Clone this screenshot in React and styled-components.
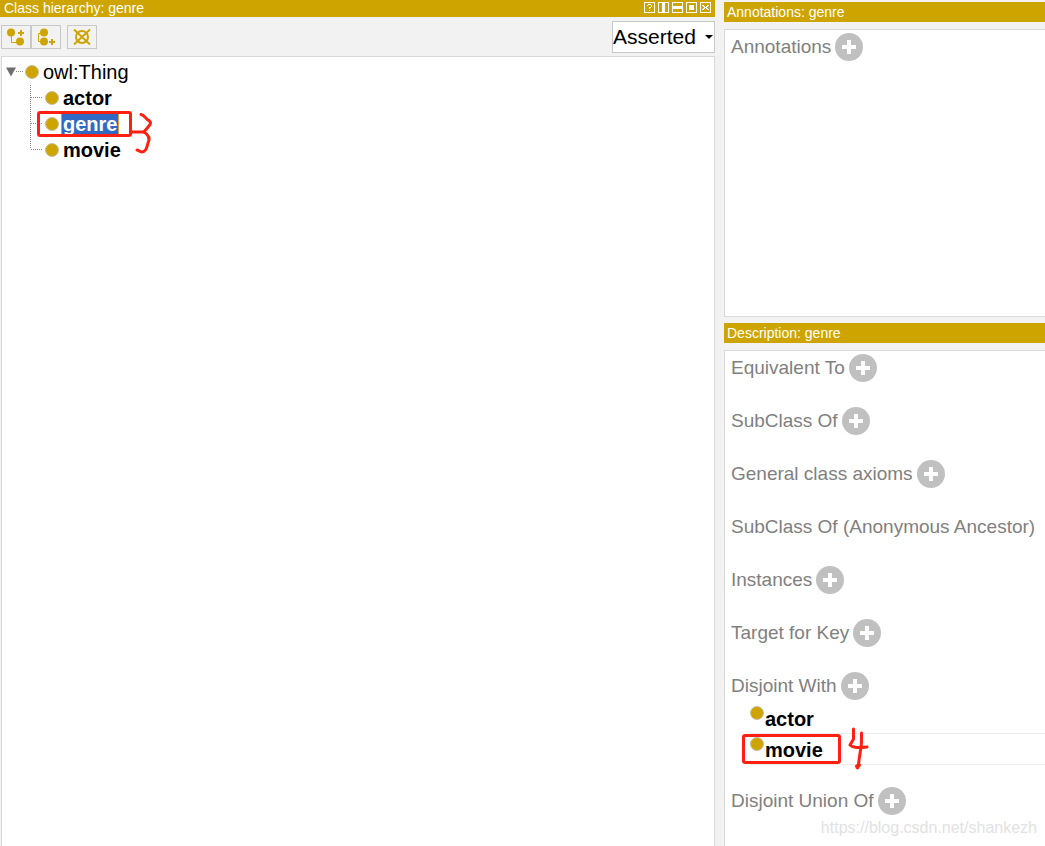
import React, { useState } from "react";
import styled, { createGlobalStyle, css } from "styled-components";

const gold = "#cea500";
const red = "#ff2010";

const GlobalStyle = createGlobalStyle`
  *, *::before, *::after { box-sizing: border-box; }
  body {
    margin: 0;
    background: #f2f2f2;
    color: #000;
    font-family: "Liberation Sans", Arial, sans-serif;
  }
  button, select { font-family: inherit; }
`;

const Workspace = styled.main`
  display: grid;
  grid-template-columns: minmax(0, 715fr) minmax(0, 321fr);
  column-gap: 9px;
  height: 100vh;
  overflow: hidden;
`;

const Column = styled.div`
  display: flex;
  flex-direction: column;
  min-width: 0;
  min-height: 0;
  padding-top: ${(p) => p.$top || 0}px;
`;

const Panel = styled.section`
  display: flex;
  flex-direction: column;
  flex: ${(p) => (p.$grow ? "1 0 auto" : "0 0 auto")};
  margin-bottom: ${(p) => (p.$grow ? 0 : 6)}px;
`;

const TitleBar = styled.header`
  display: flex;
  align-items: center;
  justify-content: space-between;
  height: ${(p) => (p.$compact ? 17 : 20)}px;
  padding: ${(p) => (p.$compact ? "0 4px 2px 4px" : "0 3px")};
  background: ${gold};
  color: #fff;
`;

const Title = styled.h2`
  margin: 0;
  font-size: 14px;
  font-weight: 400;
  line-height: 16px;
  white-space: nowrap;
`;

const WindowControls = styled.div`
  display: flex;
  gap: 3px;
`;

const WindowButton = styled.button`
  display: block;
  width: 11px;
  height: 11px;
  padding: 0;
  border: 0;
  background: none;
  svg { display: block; }
`;

const Toolbar = styled.div`
  display: flex;
  align-items: center;
  justify-content: space-between;
  padding: 4px 0 3px 1px;
`;

const ToolGroup = styled.div`
  display: flex;
`;

const ToolButton = styled.button`
  width: 30px;
  height: 24px;
  padding: 0;
  margin-left: ${(p) => (p.$apart ? 6 : 0)}px;
  border: 1px solid #c8c8c8;
  background: #f2f2f2;
  svg { display: block; margin: auto; }
`;

const SelectWrap = styled.label`
  position: relative;
  display: block;
  svg {
    position: absolute;
    top: 14px;
    right: 2px;
    pointer-events: none;
  }
`;

const ModeSelect = styled.select`
  display: block;
  appearance: none;
  width: 103px;
  height: 32px;
  padding: 0;
  border: 1px solid #c8c8c8;
  border-radius: 0;
  background: #fff;
  color: #000;
  font-size: 21px;
  line-height: 24px;
`;

const ContentBox = styled.div`
  flex: 1 0 auto;
  margin-top: ${(p) => (p.$tree ? 0 : 7)}px;
  margin-left: ${(p) => (p.$tree ? 1 : 0)}px;
  padding: ${(p) => (p.$tree ? "2px 4px" : "3px 0 0 6px")};
  min-height: ${(p) => p.$min || 0}px;
  border: 1px solid #d9d9d9;
  border-right-width: ${(p) => (p.$tree ? 1 : 0)}px;
  border-bottom-width: ${(p) => (p.$min ? 1 : 0)}px;
  background: #fff;
`;

const TreeList = styled.ul`
  margin: 0;
  padding: 0 0 0 ${(p) => (p.$nested ? 24 : 0)}px;
  list-style: none;
`;

const TreeRow = styled.div`
  position: relative;
  display: flex;
  align-items: center;
  height: 26px;
  svg { display: block; flex: none; }
`;

const Toggle = styled.button`
  width: 19px;
  height: 26px;
  padding: 0;
  border: 0;
  background: none;
`;

const ClassDot = styled.span`
  flex: none;
  width: 14px;
  height: 14px;
  border: 1px solid #c6bfa6;
  border-radius: 50%;
  background: ${gold};
`;

const ClassName = styled.span`
  margin-left: 3px;
  padding: 0 1px;
  font-size: 20px;
  font-weight: ${(p) => (p.$root ? 400 : 700)};
  line-height: 24px;
  ${(p) =>
    p.$selected &&
    css`
      background: #316ac5;
      color: #fff;
      box-shadow: 0 0 0 1px #e0a030;
    `}
`;

const Outline = styled.span`
  position: absolute;
  z-index: 1;
  top: 0;
  left: ${(p) => p.$left}px;
  width: ${(p) => p.$width}px;
  height: ${(p) => p.$height}px;
  border: 3px solid ${red};
  border-radius: 3px;
`;

const Stroke = styled.svg`
  position: absolute;
  z-index: 1;
  top: ${(p) => p.$top}px;
  left: ${(p) => p.$left}px;
  fill: none;
  stroke: ${red};
  stroke-width: 3;
  stroke-linecap: round;
  stroke-linejoin: round;
`;

const Sections = styled.div`
  display: flex;
  flex-direction: column;
  gap: 22px;
`;

const SectionHead = styled.div`
  display: flex;
  align-items: center;
  height: 28px;
  margin-bottom: 3px;
  gap: 4px;
`;

const SectionTitle = styled.h3`
  margin: 0;
  color: #808080;
  font-size: 19px;
  font-weight: 400;
  line-height: 22px;
  white-space: nowrap;
`;

const AddButton = styled.button`
  flex: none;
  width: 28px;
  height: 28px;
  padding: 0;
  border: 0;
  border-radius: 50%;
  background: #c0c0c0;
  svg { display: block; margin: auto; }
`;

const Items = styled.ul`
  margin: 0;
  padding: 0;
  list-style: none;
`;

const Item = styled.li`
  position: relative;
  display: flex;
  align-items: flex-start;
  height: 31px;
  padding: 3px 0 0 19px;
  &::after {
    content: "";
    position: absolute;
    right: 0;
    bottom: 0;
    left: 19px;
    border-bottom: 1px solid #ececec;
  }
`;

const ItemName = styled.span`
  padding: 1px;
  font-size: 20px;
  font-weight: 700;
  line-height: 24px;
`;

const Watermark = styled.p`
  position: absolute;
  right: 8px;
  bottom: 9px;
  margin: 0;
  color: #e2e2e2;
  font-size: 16px;
  line-height: 18px;
`;

const controls = [
  { label: "Help", d: "M3 3h1v1H3zM4 2h3v1H4zM7 3h1v2H7zM5 5h2v1H5zM5 6h1v1H5zM5 8h1v1H5z" },
  { label: "Split vertically", d: "M4 1h3v9H4z" },
  { label: "Split horizontally", d: "M1 4h9v3H1z" },
  { label: "Float", d: "M3 3h5v5H3z" },
  { label: "Close", d: "M2 3h2v1h1v1h1V4h1V3h2v1H8v1H7v1h1v1h1v1H7V7H6V6H5v1H4v1H2V7h1V6h1V5H3V4H2z" },
];

function ControlIcon({ d }) {
  return (
    <svg width="11" height="11" viewBox="0 0 11 11">
      <rect x="0.5" y="0.5" width="10" height="10" fill="none" stroke="#fff" />
      <path d={d} fill="#fff" />
    </svg>
  );
}

function SubclassIcon() {
  return (
    <svg width="22" height="20" viewBox="1 0 22 20" fill="none" stroke={gold}>
      <path d="M7.5 5v10.500h8" />
      <circle cx="7" cy="5.500" r="4" fill={gold} stroke="none" />
      <circle cx="16" cy="14.500" r="4" fill={gold} stroke="none" />
      <path d="M14 6h6M17 3v6" strokeWidth="2" />
    </svg>
  );
}

function SiblingIcon() {
  return (
    <svg width="22" height="20" viewBox="1 0 22 20" fill="none" stroke={gold}>
      <path d="M9 6.500H4.500v8H9" />
      <circle cx="10" cy="5.500" r="4" fill={gold} stroke="none" />
      <circle cx="10" cy="14.500" r="4" fill={gold} stroke="none" />
      <path d="M15 15h6M18 12v6" strokeWidth="2" />
    </svg>
  );
}

function DeleteIcon() {
  return (
    <svg width="20" height="20" viewBox="0 0 20 20" fill="none" stroke={gold} strokeWidth="2">
      <circle cx="10" cy="10" r="6" />
      <path d="M2 2.500l16 15M18 2.500l-16 15" strokeWidth="1.800" />
    </svg>
  );
}

function Connector({ last }) {
  return (
    <svg width="15" height="26" viewBox="0 0 15 26" fill="none" stroke="#888" strokeDasharray="1 1">
      <path d={last ? "M0.500 0v12" : "M0.500 0v26"} />
      <path d="M1 12.500h11" />
    </svg>
  );
}

function Add({ name }) {
  return (
    <AddButton type="button" aria-label={`Add ${name}`}>
      <svg width="14" height="14" viewBox="0 0 14 14">
        <path d="M5 0h4v5h5v4H9v5H5V9H0V5h5z" fill="#fff" />
      </svg>
    </AddButton>
  );
}

function Section({ name, fixed, children }) {
  return (
    <div>
      <SectionHead>
        <SectionTitle>{name}</SectionTitle>
        {!fixed && <Add name={name} />}
      </SectionHead>
      {children}
    </div>
  );
}

const classes = ["actor", "genre", "movie"];

export default function App() {
  const [open, setOpen] = useState(true);
  return (
    <>
      <GlobalStyle />
      <Workspace>
        <Column>
          <Panel $grow>
            <TitleBar $compact>
              <Title>Class hierarchy: genre</Title>
              <WindowControls>
                {controls.map((c) => (
                  <WindowButton key={c.label} type="button" aria-label={c.label}>
                    <ControlIcon d={c.d} />
                  </WindowButton>
                ))}
              </WindowControls>
            </TitleBar>
            <Toolbar>
              <ToolGroup>
                <ToolButton type="button" aria-label="Add subclass"><SubclassIcon /></ToolButton>
                <ToolButton type="button" aria-label="Add sibling class"><SiblingIcon /></ToolButton>
                <ToolButton $apart type="button" aria-label="Delete class"><DeleteIcon /></ToolButton>
              </ToolGroup>
              <SelectWrap>
                <ModeSelect aria-label="Hierarchy mode" defaultValue="Asserted">
                  <option>Asserted</option>
                  <option>Inferred</option>
                </ModeSelect>
                <svg width="8" height="4" viewBox="0 0 8 4"><path d="M0 0h8L4 4z" /></svg>
              </SelectWrap>
            </Toolbar>
            <ContentBox $tree>
              <TreeList>
                <li>
                  <TreeRow>
                    <Toggle type="button" aria-label="Toggle owl:Thing" aria-expanded={open} onClick={() => setOpen(!open)}>
                      <svg width="19" height="26" viewBox="0 0 19 26">
                        <path d="M0 8.500h10L5 17.500z" fill="#6e6e6e" />
                        <path d="M10 12.500h7" stroke="#888" strokeDasharray="1 1" />
                      </svg>
                    </Toggle>
                    <ClassDot />
                    <ClassName $root>owl:Thing</ClassName>
                  </TreeRow>
                  {open && (
                    <TreeList $nested>
                      {classes.map((name, i) => (
                        <li key={name}>
                          <TreeRow>
                            <Connector last={i === classes.length - 1} />
                            <ClassDot />
                            <ClassName $selected={name === "genre"}>{name}</ClassName>
                            {name === "genre" && (
                              <>
                                <Outline $left={7} $width={95} $height={26} />
                                <Stroke $left={100} $top={0} width="26" height="44" viewBox="0 0 26 44" aria-hidden="true">
                                  <path d="M11 3.500C15 4 15 8 19 9.500C23 13 18 15 14 21H2" />
                                  <path d="M14 21C19 24 20 28 18 32C17 37 15 41 12 41C9 41 9 39 7 39" />
                                </Stroke>
                              </>
                            )}
                          </TreeRow>
                        </li>
                      ))}
                    </TreeList>
                  )}
                </li>
              </TreeList>
            </ContentBox>
          </Panel>
        </Column>
        <Column $top={2}>
          <Panel>
            <TitleBar><Title>Annotations: genre</Title></TitleBar>
            <ContentBox $min={288}>
              <Section name="Annotations" />
            </ContentBox>
          </Panel>
          <Panel $grow>
            <TitleBar><Title>Description: genre</Title></TitleBar>
            <ContentBox>
              <Sections>
                <Section name="Equivalent To" />
                <Section name="SubClass Of" />
                <Section name="General class axioms" />
                <Section name="SubClass Of (Anonymous Ancestor)" fixed />
                <Section name="Instances" />
                <Section name="Target for Key" />
                <Section name="Disjoint With">
                  <Items>
                    <Item><ClassDot /><ItemName>actor</ItemName></Item>
                    <Item>
                      <ClassDot /><ItemName>movie</ItemName>
                      <Outline $left={11} $width={99} $height={30} />
                      <Stroke $left={115} $top={-8} width="24" height="46" viewBox="0 0 24 46" aria-hidden="true">
                        <path d="M7.500 3v10L4 19C7 22 12 22 21 21M15.500 7v9C15 24 13 31 12.500 39" />
                        <path d="M10.500 40l3-1l-2 3z" />
                      </Stroke>
                    </Item>
                  </Items>
                </Section>
                <Section name="Disjoint Union Of" />
              </Sections>
            </ContentBox>
          </Panel>
        </Column>
      </Workspace>
      <Watermark>https://blog.csdn.net/shankezh</Watermark>
    </>
  );
}
